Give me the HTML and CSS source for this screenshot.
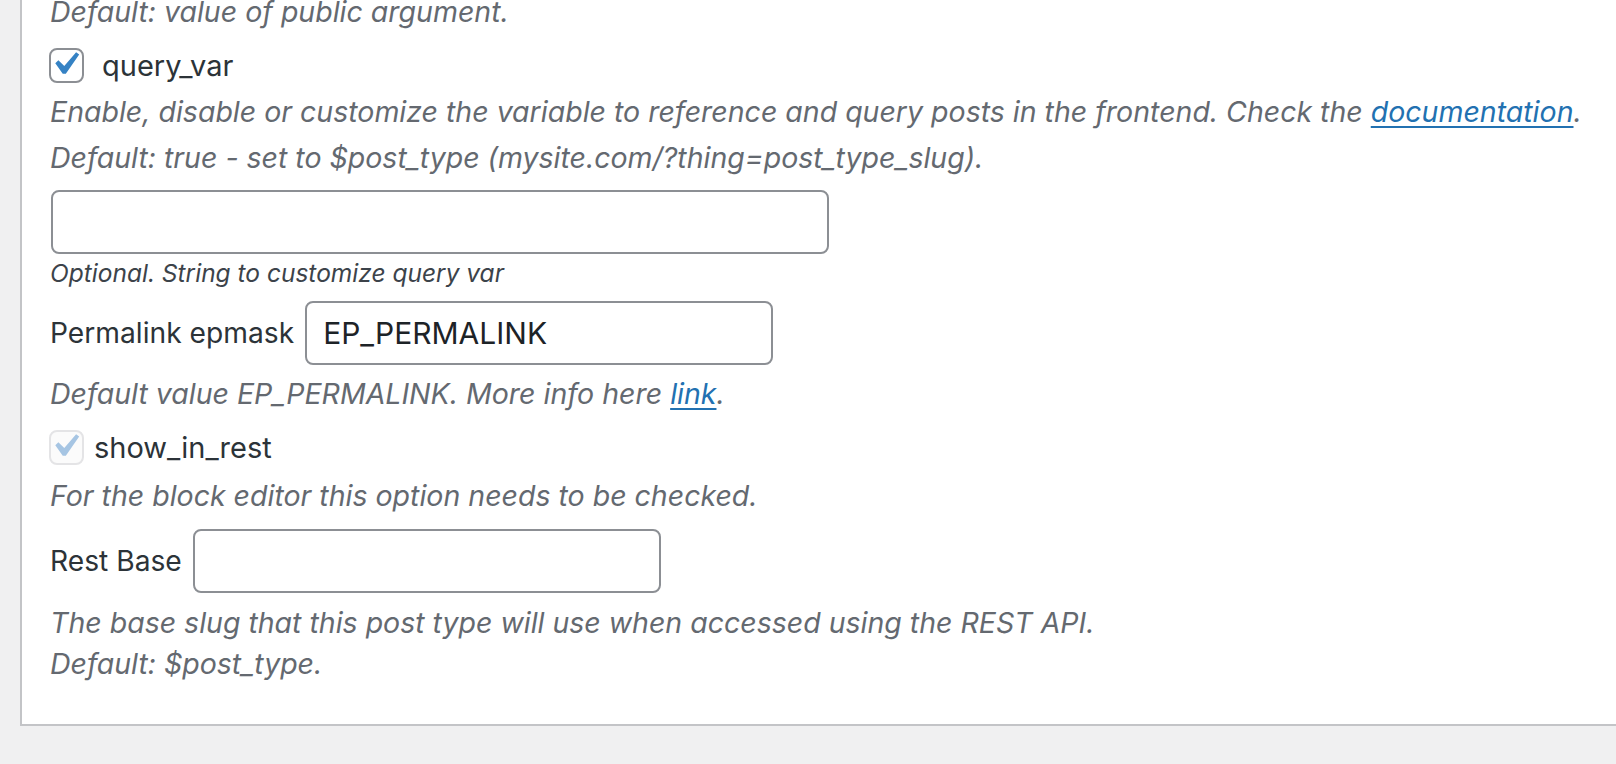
FILE: index.html
```html
<!DOCTYPE html>
<html lang="en">
<head>
    <meta charset="UTF-8">
    <meta name="viewport" content="width=device-width, initial-scale=1.0">
    <title>Post Type Settings</title>
    <link rel="stylesheet" href="styles.css">
</head>
<body>
    <div class="panel">
        <p class="description first">Default: value of public argument.</p>

        <label class="check-row">
            <span class="check-box">
                <svg viewBox="0 0 20 20" width="46" height="46"><path d="M14.83 4.89l1.34.94-5.81 8.38H9.02L5.78 9.67l1.34-1.25 2.57 2.4z"/></svg>
            </span>
            <span class="check-label">query_var</span>
        </label>
        <p class="description after-check">Enable, disable or customize the variable to reference and query posts in the frontend. Check the <a href="#">documentation</a>.</p>
        <p class="description second-line">Default: true - set to $post_type (mysite.com/?thing=post_type_slug).</p>

        <input type="text" class="field wide">
        <p class="hint">Optional. String to customize query var</p>

        <div class="field-row permalink">
            <span class="field-label">Permalink epmask</span>
            <input type="text" class="field" value="EP_PERMALINK">
        </div>
        <p class="description after-field">Default value EP_PERMALINK. More info here <a href="#">link</a>.</p>

        <label class="check-row disabled">
            <span class="check-box">
                <svg viewBox="0 0 20 20" width="46" height="46"><path d="M14.83 4.89l1.34.94-5.81 8.38H9.02L5.78 9.67l1.34-1.25 2.57 2.4z"/></svg>
            </span>
            <span class="check-label">show_in_rest</span>
        </label>
        <p class="description after-check rest-note">For the block editor this option needs to be checked.</p>

        <div class="field-row rest">
            <span class="field-label">Rest Base</span>
            <input type="text" class="field">
        </div>
        <p class="description after-field two-lines">The base slug that this post type will use when accessed using the REST API.<br>Default: $post_type.</p>
    </div>
</body>
</html>
```

FILE: styles.css
```css
body {
    margin: 0;
    background-color: #f0f0f1;
    font-family: Inter, "Noto Sans", sans-serif;
    color: #2c3338;
}

.panel {
    margin: -8px 0 0 20px;
    padding: 0 0 40px 28px;
    background-color: #fff;
    border-left: 2px solid #c3c4c7;
    border-bottom: 2px solid #c3c4c7;
}

p {
    margin: 0;
}

.description {
    font-size: 28.5px;
    line-height: 40px;
    font-style: italic;
    color: #646970;
}

.description a {
    color: #2271b1;
    text-decoration: underline;
    text-decoration-thickness: 2px;
    text-underline-offset: 4px;
}

.after-check {
    margin-top: 7px;
}

.rest-note {
    margin-top: 9px;
}

.second-line {
    margin-top: 6px;
}

.after-field {
    margin-top: 9px;
}

.two-lines {
    line-height: 41px;
}

/* checkbox rows */
.check-row {
    display: flex;
    align-items: center;
    height: 40px;
    margin-top: 13px;
}

.check-row.disabled {
    margin-top: 13px;
}

.check-box {
    box-sizing: border-box;
    width: 35px;
    height: 35px;
    border: 2px solid #8c8f94;
    border-radius: 8px;
    background-color: #fff;
    display: flex;
    align-items: center;
    justify-content: center;
    overflow: visible;
    margin-left: -1px;
}

.check-box svg {
    fill: #3582c4;
    flex-shrink: 0;
    margin: -6px 0 -4px -3px;
}

.check-label {
    margin-left: 18px;
    font-size: 29px;
}

.disabled .check-box {
    border-color: #e4e4e6;
    background-color: #fbfbfb;
}

.disabled .check-box svg {
    fill: #a6c5e3;
}

.disabled .check-label {
    margin-left: 10px;
}

/* text fields */
.field {
    box-sizing: border-box;
    display: block;
    width: 468px;
    height: 64px;
    padding: 0 16px;
    border: 2px solid #8c8f94;
    border-radius: 8px;
    background-color: #fff;
    font-family: Inter, "Noto Sans", sans-serif;
    font-size: 30px;
    color: #1d2327;
    outline: none;
}

.field.wide {
    width: 778px;
    margin: 12px 0 0 1px;
}

.hint {
    margin-top: 4px;
    font-size: 24.5px;
    line-height: 30px;
    font-style: italic;
    color: #3c434a;
}

.field-row {
    display: flex;
    align-items: center;
    gap: 11px;
    margin-top: 13px;
}

.field-row.rest {
    margin-top: 13px;
}

.field-label {
    font-size: 28.2px;
    color: #2c3338;
}
```
